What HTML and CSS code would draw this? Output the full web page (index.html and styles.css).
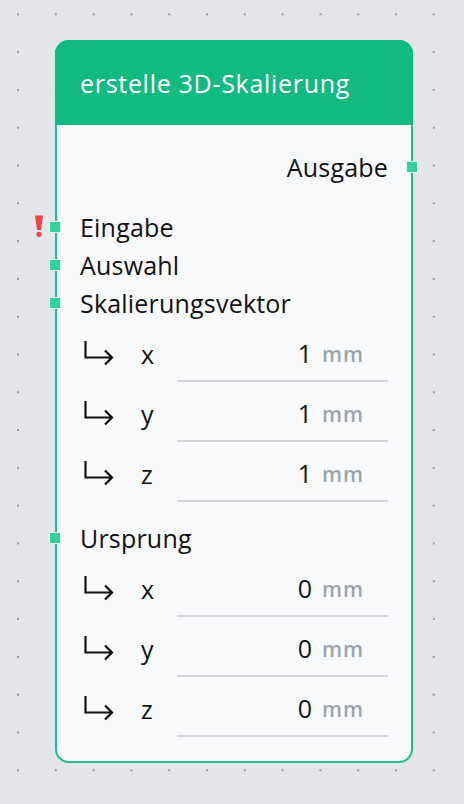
FILE: index.html
```html
<!DOCTYPE html>
<html>
<head>
<meta charset="utf-8">
<link rel="stylesheet" href="styles.css">
</head>
<body>
<div class="canvas">
  <div class="node">
    <div class="node-header">erstelle 3D-Skalierung</div>
    <div class="node-body">
      <div class="port-row output">
        <span class="label">Ausgabe</span>
        <span class="socket socket-right"></span>
      </div>
      <div class="inputs">
        <div class="port-row">
          <svg class="warn" viewBox="0 0 10 22" width="10" height="22"><path d="M1 0.5 H9 L7 15 H3 Z" fill="#ef4444"/><circle cx="5" cy="19.3" r="2.6" fill="#ef4444"/></svg>
          <span class="socket socket-left"></span>
          <span class="label">Eingabe</span>
        </div>
        <div class="port-row">
          <span class="socket socket-left"></span>
          <span class="label">Auswahl</span>
        </div>
        <div class="port-row">
          <span class="socket socket-left"></span>
          <span class="label">Skalierungsvektor</span>
        </div>
        <div class="vec-row">
          <svg class="sub-arrow" viewBox="0 0 30 26" width="30" height="26"><path d="M1.5 1 V17.5 H28 M21 10.5 L28 17.5 L21 24.5" fill="none" stroke="#111" stroke-width="2.2"/></svg>
          <span class="axis">x</span>
          <div class="field"><span class="val">1</span><span class="unit">mm</span></div>
        </div>
        <div class="vec-row">
          <svg class="sub-arrow" viewBox="0 0 30 26" width="30" height="26"><path d="M1.5 1 V17.5 H28 M21 10.5 L28 17.5 L21 24.5" fill="none" stroke="#111" stroke-width="2.2"/></svg>
          <span class="axis">y</span>
          <div class="field"><span class="val">1</span><span class="unit">mm</span></div>
        </div>
        <div class="vec-row">
          <svg class="sub-arrow" viewBox="0 0 30 26" width="30" height="26"><path d="M1.5 1 V17.5 H28 M21 10.5 L28 17.5 L21 24.5" fill="none" stroke="#111" stroke-width="2.2"/></svg>
          <span class="axis">z</span>
          <div class="field"><span class="val">1</span><span class="unit">mm</span></div>
        </div>
        <div class="port-row group-start">
          <span class="socket socket-left"></span>
          <span class="label">Ursprung</span>
        </div>
        <div class="vec-row">
          <svg class="sub-arrow" viewBox="0 0 30 26" width="30" height="26"><path d="M1.5 1 V17.5 H28 M21 10.5 L28 17.5 L21 24.5" fill="none" stroke="#111" stroke-width="2.2"/></svg>
          <span class="axis">x</span>
          <div class="field"><span class="val">0</span><span class="unit">mm</span></div>
        </div>
        <div class="vec-row">
          <svg class="sub-arrow" viewBox="0 0 30 26" width="30" height="26"><path d="M1.5 1 V17.5 H28 M21 10.5 L28 17.5 L21 24.5" fill="none" stroke="#111" stroke-width="2.2"/></svg>
          <span class="axis">y</span>
          <div class="field"><span class="val">0</span><span class="unit">mm</span></div>
        </div>
        <div class="vec-row">
          <svg class="sub-arrow" viewBox="0 0 30 26" width="30" height="26"><path d="M1.5 1 V17.5 H28 M21 10.5 L28 17.5 L21 24.5" fill="none" stroke="#111" stroke-width="2.2"/></svg>
          <span class="axis">z</span>
          <div class="field"><span class="val">0</span><span class="unit">mm</span></div>
        </div>
      </div>
    </div>
  </div>
</div>
</body>
</html>
```
FILE: styles.css
```css
html, body {
  margin: 0;
  padding: 0;
}
body {
  width: 464px;
  height: 804px;
  overflow: hidden;
  font-family: "Open Sans", "Noto Sans", sans-serif;
}
.canvas {
  width: 464px;
  height: 804px;
  box-sizing: border-box;
  padding: 40px 0 0 55px;
  background-color: #e5e6ea;
  background-image: radial-gradient(circle, #9a9ca3 1.1px, transparent 1.5px);
  background-size: 37.8px 37.8px;
  background-position: -0.9px -4.6px;
}
.node {
  width: 358px;
  box-sizing: border-box;
  border: 2px solid #1fbf87;
  border-radius: 14px;
  background: #f8f9fb;
}
.node-header {
  height: 85px;
  margin: -2px -2px 0 -2px;
  padding: 0 0 0 25px;
  display: flex;
  align-items: center;
  background: #12b981;
  color: #fff;
  font-size: 25px;
  letter-spacing: 0.7px;
  border-radius: 14px 14px 0 0;
}
.node-body {
  padding: 23px 23px 24px 23px;
  display: flex;
  flex-direction: column;
}
.port-row {
  position: relative;
  height: 38px;
  display: flex;
  align-items: center;
  font-size: 25px;
  letter-spacing: 0.2px;
  color: #111;
}
.port-row.output {
  justify-content: flex-end;
  margin-bottom: 22px;
}
.port-row.group-start {
  margin-top: 17px;
}
.label {
  line-height: 1;
}
.inputs {
  display: flex;
  flex-direction: column;
}
.socket {
  position: absolute;
  width: 10px;
  height: 10px;
  background: #34d399;
  border: 1px solid #e4f8ef;
  top: 50%;
  margin-top: -6px;
}
.socket-left {
  left: -31px;
}
.socket-right {
  right: -30px;
}
.warn {
  position: absolute;
  left: -46px;
  top: 7px;
}
.vec-row {
  height: 60px;
  display: grid;
  grid-template-columns: 57px 36px 1fr;
  align-items: center;
  padding-left: 4px;
}
.sub-arrow {
  align-self: center;
  margin-top: 2px;
}
.axis {
  font-size: 25px;
  color: #111;
  line-height: 1;
  margin-top: 4px;
}
.field {
  align-self: stretch;
  border-bottom: 2px solid #d3d5da;
  display: flex;
  justify-content: flex-end;
  align-items: center;
  padding: 4px 25px 0 0;
  gap: 10px;
}
.val {
  font-size: 25px;
  color: #111;
  line-height: 1;
}
.unit {
  font-size: 21px;
  font-weight: 600;
  color: #9ea3ae;
  letter-spacing: 1px;
  line-height: 1;
  margin-top: 2px;
  margin-right: -1px;
}
```
